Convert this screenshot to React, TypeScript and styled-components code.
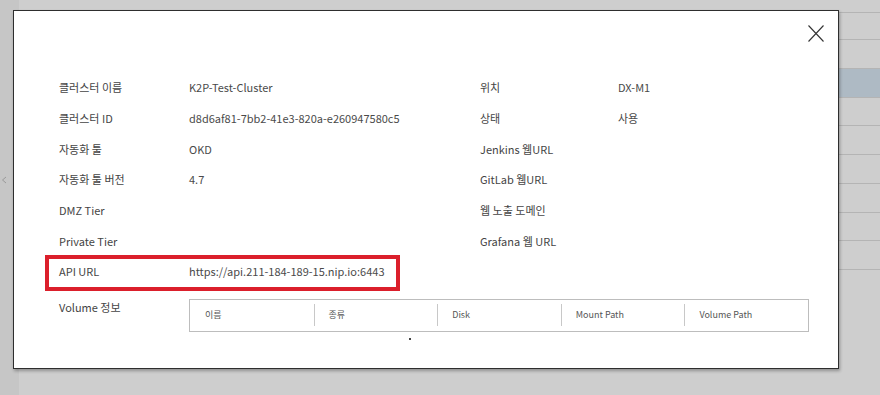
import React from 'react';
import styled, { createGlobalStyle } from 'styled-components';

const GlobalStyle = createGlobalStyle`
  html, body {
    margin: 0;
    padding: 0;
  }
  body {
    width: 880px;
    height: 395px;
    overflow: hidden;
    background: #cdcdcd;
    font-family: "Noto Sans CJK KR", "Noto Sans", sans-serif;
    color: #444;
  }
`;

type Info = {
  label: string;
  value: string;
  sideLabel?: string;
  sideValue?: string;
};

const infoRows: Info[] = [
  { label: '클러스터 이름', value: 'K2P-Test-Cluster', sideLabel: '위치', sideValue: 'DX-M1' },
  { label: '클러스터 ID', value: 'd8d6af81-7bb2-41e3-820a-e260947580c5', sideLabel: '상태', sideValue: '사용' },
  { label: '자동화 툴', value: 'OKD', sideLabel: 'Jenkins 웹URL' },
  { label: '자동화 툴 버전', value: '4.7', sideLabel: 'GitLab 웹URL' },
  { label: 'DMZ Tier', value: '', sideLabel: '웹 노출 도메인' },
  { label: 'Private Tier', value: '', sideLabel: 'Grafana 웹 URL' },
];

const volumeColumns = ['이름', '종류', 'Disk', 'Mount Path', 'Volume Path'];

const App = () => {
  return (
    <>
      <GlobalStyle />
      <Page>
        <Sidebar>
          <Chevron width="6" height="8" viewBox="0 0 6 8">
            <path d="M5 1 L1.5 4 L5 7" fill="none" stroke="#9a9a9a" strokeWidth="1" />
          </Chevron>
        </Sidebar>
        <Main>
          <ListHead />
          {Array.from({ length: 8 }).map((_, i) => (
            <ListRow key={i} $selected={i === 1} />
          ))}
        </Main>
        <ClusterModal />
      </Page>
    </>
  );
};

export default App;

const ClusterModal = () => {
  return (
    <Modal>
      <ModalHead>
        <CloseButton aria-label="close">
          <svg width="16" height="17" viewBox="0 0 16 17">
            <path d="M0.5 0.5 L15.5 16.5 M15.5 0.5 L0.5 16.5" stroke="#333" strokeWidth="1.1" fill="none" />
          </svg>
        </CloseButton>
      </ModalHead>
      <ModalBody>
        {infoRows.map((row) => (
          <InfoRow key={row.label}>
            <Label>{row.label}</Label>
            <Value>{row.value}</Value>
            <Label>{row.sideLabel}</Label>
            <Value>{row.sideValue}</Value>
          </InfoRow>
        ))}
        <InfoRow $highlight>
          <Label>API URL</Label>
          <Value>https://api.211-184-189-15.nip.io:6443</Value>
        </InfoRow>
        <VolumeRow>
          <VolumeLabel>Volume 정보</VolumeLabel>
          <div>
            <VolumeTable>
              {volumeColumns.map((col, i) => (
                <HeadCell key={col} $first={i === 0}>
                  {col}
                </HeadCell>
              ))}
            </VolumeTable>
            <Dot />
          </div>
        </VolumeRow>
      </ModalBody>
    </Modal>
  );
};

const Page = styled.div`
  position: relative;
  display: flex;
  width: 880px;
  height: 395px;
`;

const Sidebar = styled.div`
  width: 19px;
  flex-shrink: 0;
  background: #c6c6c6;
  padding-top: 176px;
  box-sizing: border-box;
`;

const Chevron = styled.svg`
  display: block;
  margin-left: 1px;
`;

const Main = styled.div`
  flex: 1;
  background: #cecece;
  padding-top: 12px;
`;

const ListHead = styled.div`
  height: 26px;
  border-top: 1px solid #b4b4b4;
  border-bottom: 1px solid #b4b4b4;
`;

const ListRow = styled.div<{ $selected?: boolean }>`
  height: 27.75px;
  border-bottom: 1px solid #b4b4b4;
  background: ${(p) => (p.$selected ? '#aebac4' : 'transparent')};
`;

const Modal = styled.div`
  position: absolute;
  left: 13px;
  top: 10px;
  width: 826px;
  height: 359px;
  box-sizing: border-box;
  background: #fff;
  border: 1px solid #2e2e2e;
  box-shadow: 1px 2px 3px rgba(0, 0, 0, 0.3);
`;

const ModalHead = styled.div`
  display: flex;
  justify-content: flex-end;
  padding: 14px 14px 0 0;
`;

const CloseButton = styled.button`
  display: flex;
  padding: 0;
  border: 0;
  background: none;
  cursor: pointer;
`;

const ModalBody = styled.div`
  padding: 30px 0 0 45px;
`;

const InfoRow = styled.div<{ $highlight?: boolean }>`
  position: relative;
  display: grid;
  grid-template-columns: 130px 291px 138px 1fr;
  align-items: center;
  height: 30.7px;
  font-size: 11px;

  ${(p) =>
    p.$highlight &&
    `
    &::before {
      content: '';
      position: absolute;
      left: -14px;
      top: -1px;
      width: 355px;
      height: 36px;
      box-sizing: border-box;
      border: 4px solid #db1f2b;
      pointer-events: none;
    }
  `}
`;

const Label = styled.span`
  white-space: nowrap;
  color: #444;
`;

const Value = styled.span`
  white-space: nowrap;
  color: #4a4a4a;
`;

const VolumeRow = styled.div`
  display: grid;
  grid-template-columns: 130px 620px;
  margin-top: 12px;
  font-size: 11px;
`;

const VolumeLabel = styled.span`
  line-height: 16px;
  color: #444;
`;

const VolumeTable = styled.div`
  display: grid;
  grid-template-columns: repeat(5, 1fr);
  height: 33px;
  box-sizing: border-box;
  border: 1px solid #bdbdbd;
`;

const HeadCell = styled.div<{ $first?: boolean }>`
  display: flex;
  align-items: center;
  margin: 4px 0 5px;
  padding-left: ${(p) => (p.$first ? '15px' : '14px')};
  border-left: ${(p) => (p.$first ? 'none' : '1px solid #c8c8c8')};
  font-size: 9px;
  color: #555;
`;

const Dot = styled.div`
  width: 2px;
  height: 2px;
  margin: 6px 0 0 220px;
  background: #444;
`;
